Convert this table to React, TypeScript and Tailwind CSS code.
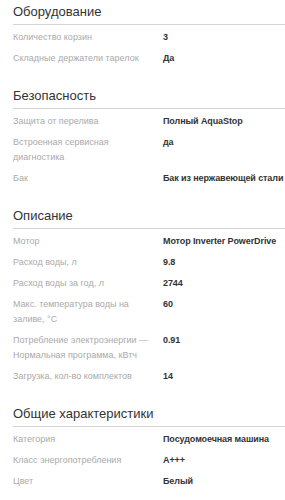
const sections = [
  {
    title: 'Оборудование',
    rows: [
      ['Количество корзин', '3'],
      ['Складные держатели тарелок', 'Да'],
    ],
  },
  {
    title: 'Безопасность',
    rows: [
      ['Защита от перелива', 'Полный AquaStop'],
      ['Встроенная сервисная диагностика', 'да'],
      ['Бак', 'Бак из нержавеющей стали'],
    ],
  },
  {
    title: 'Описание',
    rows: [
      ['Мотор', 'Мотор Inverter PowerDrive'],
      ['Расход воды, л', '9.8'],
      ['Расход воды за год, л', '2744'],
      ['Макс. температура воды на заливе, °C', '60'],
      ['Потребление электроэнергии — Нормальная программа, кВтч', '0.91'],
      ['Загрузка, кол-во комплектов', '14'],
    ],
  },
  {
    title: 'Общие характеристики',
    rows: [
      ['Категория', 'Посудомоечная машина'],
      ['Класс энергопотребления', 'A+++'],
      ['Цвет', 'Белый'],
    ],
  },
];

export default function App() {
  return (
    <div className="bg-white min-h-[500px] pl-[13px] font-['Liberation_Sans',Arial,sans-serif]">
      {sections.map((section, index) => (
        <div key={index} className="mb-[15px]">
          <h2 className="py-[4px] text-[13px] leading-[16px] text-[#333] border-b border-[#d4d4d4]">
            {section.title}
          </h2>
          <div className="pt-[2px]">
            {section.rows.map(([label, value], rIndex) => (
              <div key={rIndex} className="flex py-[3px] text-[9px] leading-[15px]">
                <div className="w-[150px] shrink-0 pr-[10px] text-[#aaa]">{label}</div>
                <div className="font-bold text-[#333] whitespace-nowrap tracking-[-0.1px]">{value}</div>
              </div>
            ))}
          </div>
        </div>
      ))}
    </div>
  );
}
